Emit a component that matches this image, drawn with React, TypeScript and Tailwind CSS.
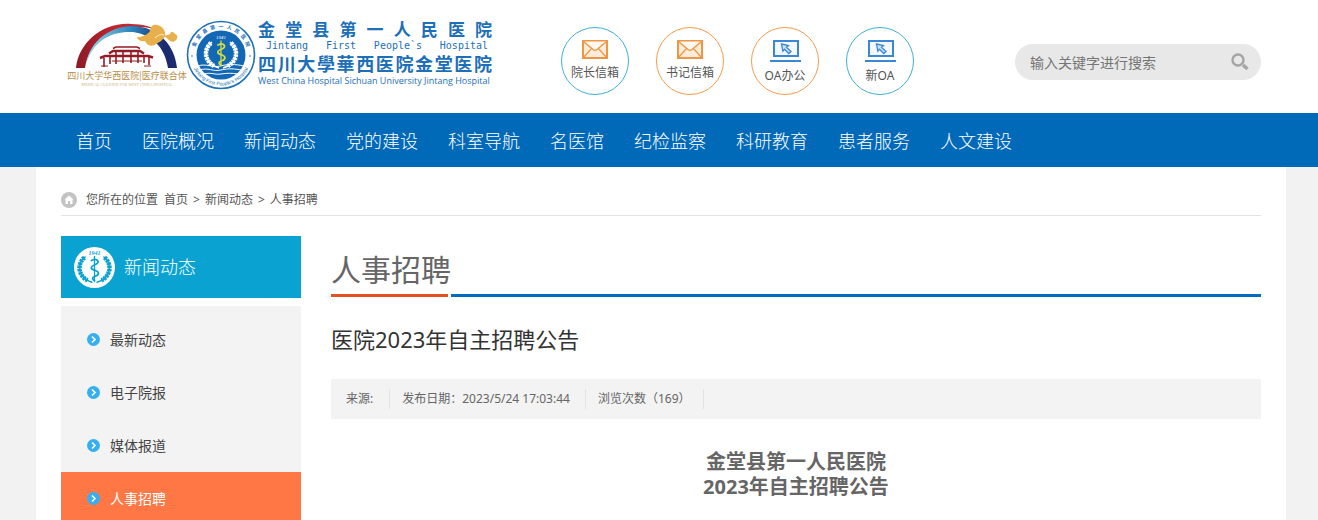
import type { ReactNode } from 'react';

const NAV = ['首页', '医院概况', '新闻动态', '党的建设', '科室导航', '名医馆', '纪检监察', '科研教育', '患者服务', '人文建设'];

const SIDE_LINKS = ['最新动态', '电子院报', '媒体报道', '人事招聘'];
const ACTIVE_LINK = '人事招聘';

const HOSPITAL_NAME = [...'金堂县第一人民医院'];

function MailIcon() {
  return (
    <svg width="26" height="19" viewBox="0 0 26 19" fill="#fdecd9" stroke="#ee9645" strokeWidth="2" aria-hidden="true">
      <rect x="1" y="1" width="24" height="17" />
      <path d="M1.5 1.5 11 9.500q2 1.500 4 0l9.500-8" fill="#fff8f0" strokeWidth="1.400" />
      <path d="M1.500 17.500 9.500 8.500M24.500 17.500 16.500 8.500" fill="none" strokeWidth="1.200" />
    </svg>
  );
}

function LaptopIcon() {
  return (
    <svg width="31" height="22" viewBox="0 0 31 22" fill="none" stroke="#3a88d4" strokeWidth="2" aria-hidden="true">
      <rect x="4" y="1" width="24" height="15" fill="#f3f8fd" />
      <path d="M0 21h31" />
      <path d="m11.500 4 7 1.500-2 1.800 4.500 4.200-2.200 2-4.300-4.300-1.600 2z" fill="#cfe2f5" strokeWidth="1.300" />
    </svg>
  );
}

function RoundLink({ label, ring, children }: { label: string; ring: string; children: ReactNode }) {
  return (
    <a href="#" className={`flex size-[68px] flex-col items-center rounded-full border pt-3 text-[12px] text-[#555] ${ring}`}>
      {children}
      <span className="mt-[5px] leading-[18px] whitespace-nowrap">{label}</span>
    </a>
  );
}

function AllianceLogo() {
  return (
    <svg width="118" height="68" viewBox="0 0 118 68" className="overflow-visible" aria-hidden="true">
      <defs>
        <linearGradient id="arc-red" x1="0" x2="1">
          <stop offset="0" stopColor="#8a1a26" />
          <stop offset="0.500" stopColor="#c2252f" />
          <stop offset="1" stopColor="#b8323a" />
        </linearGradient>
        <linearGradient id="arc-blue" x1="0" x2="1">
          <stop offset="0" stopColor="#9ad6e6" />
          <stop offset="0.500" stopColor="#2b86bb" />
          <stop offset="0.850" stopColor="#1c2b70" />
        </linearGradient>
      </defs>
      <path d="M9 44C12 18 36-2 64 0c12 0 20 3 24 5C60-2 24 8 18 44z" fill="url(#arc-red)" />
      <path d="M19 40C23 16 44 2 66 2c26 1 42 20 44 42h-9C98 24 86 11 66 8 44 7 27 16 19 40z" fill="url(#arc-blue)" />
      <path d="M98 12c1-6-3-10-8-11-4-1-7 2-7 6-3 4-8 6-13 6 1 4 5 5 8 4 2 5 8 6 11 3 4-2 8-5 9-8z" fill="#e7b04a" />
      <path d="M96 11c3 1 5 0 7-1 1-3 4-2 5 0 3 1 3 4 1 6-2 3-6 2-8-1l-5-4z" fill="#e7b04a" />
      <path d="M97 11c-3-1-6 0-9 3" fill="none" stroke="#fff3d6" />
      <g fill="none" stroke="#941c27">
        <path d="M46 24.500 49 23h21l3 1.500" strokeWidth="1.500" />
        <path d="M42 29.500 46 27h27l4 2.500" strokeWidth="2.500" />
        <path d="M33 34 38 32h43l5 1.500" strokeWidth="2.500" />
        <path d="M37 34v9m6-10v7m6-12v12m7-13v12m8-12v12m7-12v12m6-7v7m5-8v10" strokeWidth="1.600" />
        <path d="M34 42h7m36 0h7M45 37h30" />
      </g>
      <text x="60" y="55" textAnchor="middle" fill="#b68d45" fontSize="9" fontFamily="'Noto Sans CJK SC', sans-serif">四川大学华西医院|医疗联合体</text>
      <text x="60" y="62" textAnchor="middle" fill="#cdb184" fontSize="4" fontFamily="'Liberation Serif', serif">MEDICAL CLUSTER FOR WEST CHINA HOSPITAL</text>
    </svg>
  );
}

function Staff({ stroke }: { stroke: string }) {
  return (
    <g fill="none" stroke={stroke} strokeLinecap="round">
      <path d="M0-13V12" strokeWidth="1.300" />
      <path d="M-3-9C3-12 6-7 1-5c-6 2-5 5 0 6 5 2 3 5-1 6-3 1-2 3 0 4" strokeWidth="1.800" />
    </g>
  );
}

function Laurel({ stroke }: { stroke: string }) {
  return (
    <g fill="none" stroke={stroke}>
      <path d="M-9-12C-19-4-16 10-2 14M9-12C19-4 16 10 2 14" strokeWidth="1.500" />
      <path d="M-10-11C-18-4-16 7-7 12M10-11C18-4 16 7 7 12" strokeWidth="4.500" strokeDasharray="2.500 0.700" />
    </g>
  );
}

function HospitalSeal() {
  return (
    <svg width="70" height="70" viewBox="-35 -35 70 70" aria-hidden="true">
      <defs>
        <path id="seal-bottom" d="M-28 12A30.500 30.500 0 0 0 28 12" />
      </defs>
      <circle r="33.500" fill="#fff" stroke="#1d6fb8" strokeWidth="1.600" />
      <circle r="24.500" fill="#1268b5" />
      <path d="M-23 11c8-3 14 2 22 0s15-2 24 0M-21 15c8-3 13 2 21 0s14-1 21 0M-17 19c7-2 11 1 17 0s11-1 17 0" fill="none" stroke="#fff" />
      <g transform="translate(0 -1)"><Laurel stroke="#fff" /></g>
      <g transform="translate(0 -1)"><Staff stroke="#d5df3c" /></g>
      <text y="-16" textAnchor="middle" fill="#fff" fontSize="5" fontStyle="italic" fontFamily="'Liberation Serif', serif">1941</text>
      <g fill="#1d6fb8">
        {HOSPITAL_NAME.map((char, i) => (
          <text key={i} y="-27" transform={`rotate(${(i - 4) * 17})`} textAnchor="middle" fontSize="5" fontWeight="700" fontFamily="'Noto Sans CJK SC', sans-serif">{char}</text>
        ))}
        <circle cx="-29" cy="1" r="0.800" />
        <circle cx="29" cy="1" r="0.800" />
        <text fontSize="5" fontFamily="'Liberation Sans', sans-serif">
          <textPath href="#seal-bottom" startOffset="50%" textAnchor="middle">Jintang First People's Hospital</textPath>
        </text>
      </g>
    </svg>
  );
}

function Spread({ parts, className }: { parts: string[]; className: string }) {
  return (
    <span className={`flex justify-between ${className}`}>
      {parts.map((part, i) => <span key={i}>{part}</span>)}
    </span>
  );
}

function Brand() {
  return (
    <a href="#" className="flex shrink-0 items-start text-[#1d6fb8]">
      <span className="pt-1 pr-px"><AllianceLogo /></span>
      <HospitalSeal />
      <span className="ml-[2px] block w-[238px]">
        <Spread parts={HOSPITAL_NAME} className="pr-1 text-[17px] leading-[20px] font-bold" />
        <Spread parts={['Jintang', 'First', 'People`s', 'Hospital']} className="pr-2 pl-2 font-['DejaVu_Sans_Mono',monospace] text-[10px] leading-[12px]" />
        <Spread parts={[...'四川大學華西医院金堂医院']} className="pr-1 text-[18px] leading-[24px] font-bold" />
        <span className="block font-['Open_Sans',sans-serif] text-[9px] leading-[10px] font-medium whitespace-nowrap">West China Hospital Sichuan University Jintang Hospital</span>
      </span>
    </a>
  );
}

function Header() {
  return (
    <header className="flex h-[113px] items-start pr-[57px] pl-[67px]">
      <div className="pt-5"><Brand /></div>
      <div className="flex gap-[27px] pt-[27px] pl-[65px]">
        <RoundLink label="院长信箱" ring="border-[#3eb1d6]"><MailIcon /></RoundLink>
        <RoundLink label="书记信箱" ring="border-[#fb9a4b]"><MailIcon /></RoundLink>
        <RoundLink label="OA办公" ring="border-[#fb9a4b]"><LaptopIcon /></RoundLink>
        <RoundLink label="新OA" ring="border-[#3eb1d6]"><LaptopIcon /></RoundLink>
      </div>
      <form className="mt-11 ml-auto flex h-9 w-[246px] items-center rounded-full bg-[#e8e8e8] pr-3 pl-[15px]">
        <input
          type="text"
          aria-label="搜索"
          placeholder="输入关键字进行搜索"
          className="min-w-0 flex-1 bg-transparent text-[14px] outline-none placeholder:text-[#757575]"
        />
        <button type="button" aria-label="搜索">
          <svg width="18" height="18" viewBox="0 0 18 18" fill="none" stroke="#a5a5a5">
            <circle cx="7" cy="7" r="5.500" strokeWidth="2.400" />
            <path d="m12 12 4.500 4" strokeWidth="3.600" />
          </svg>
        </button>
      </form>
    </header>
  );
}

function Breadcrumb() {
  return (
    <nav className="flex h-[49px] items-center border-b border-[#e3e3e3] pt-[18px] text-[12px] text-[#555]">
      <svg width="16" height="16" viewBox="0 0 16 16" aria-hidden="true">
        <circle cx="8" cy="8" r="8" fill="#c3c3c3" />
        <path d="m8 3.500 4.500 4H11.500V12H9V9H7v3H4.500V7.500h-1z" fill="#fff" />
      </svg>
      <span className="ml-[9px]">您所在的位置</span>
      <a href="#" className="ml-[6px]">首页</a>
      <span className="mx-[5px]">&gt;</span>
      <a href="#">新闻动态</a>
      <span className="mx-[5px]">&gt;</span>
      <a href="#">人事招聘</a>
    </nav>
  );
}

function Sidebar() {
  return (
    <aside className="w-60 shrink-0">
      <h2 className="flex h-[62px] items-center bg-[#0aa2d1] pl-[13px] text-[18px] font-light text-white">
        <svg width="41" height="41" viewBox="-20.5 -20.5 41 41" className="mr-[9px]" aria-hidden="true">
          <circle r="20.500" fill="#fff" />
          <g transform="translate(0 1)"><Laurel stroke="#0aa2d1" /></g>
          <g transform="translate(0 2)"><Staff stroke="#0aa2d1" /></g>
          <text y="-12.500" textAnchor="middle" fill="#0aa2d1" fontSize="6" fontStyle="italic" fontWeight="700" fontFamily="'Liberation Serif', serif">1941</text>
        </svg>
        新闻动态
      </h2>
      <ul className="mt-2 bg-[#f3f3f3] pt-[7px]">
        {SIDE_LINKS.map((name) => (
          <li key={name}>
            <a
              href="#"
              className={`flex h-[53px] items-center gap-[10px] pl-[26px] text-[14px] ${name === ACTIVE_LINK ? 'bg-[#ff7744] text-white' : 'text-[#444]'}`}
            >
              <svg width="13" height="13" viewBox="0 0 13 13" aria-hidden="true">
                <circle cx="6.500" cy="6.500" r="6.500" fill="#35aff2" />
                <path d="m5 3.500 3 3-3 3" fill="none" stroke="#fff" strokeWidth="1.600" />
              </svg>
              {name}
            </a>
          </li>
        ))}
      </ul>
    </aside>
  );
}

function Article() {
  return (
    <article className="min-w-0 flex-1 text-[#666]">
      <h1 className="flex h-[58px] items-center pt-2 text-[30px]">人事招聘</h1>
      <div className="flex gap-[3px]">
        <div className="h-[3px] w-[117px] bg-[#e65021]" />
        <div className="h-[3px] flex-1 bg-[#006dc3]" />
      </div>
      <h2 className="mt-[25px] text-[22px] leading-[34px] text-[#333]">医院2023年自主招聘公告</h2>
      <div className="mt-[23px] flex h-10 items-center bg-[#f3f3f3] pl-[15px] text-[12px] leading-[20px]">
        <span className="border-r border-[#e3e3e3] pr-4">来源:</span>
        <span className="border-r border-[#e3e3e3] pr-[15px] pl-3">发布日期：2023/5/24 17:03:44</span>
        <span className="border-r border-[#e3e3e3] px-3">浏览次数（169）</span>
      </div>
      <p className="mt-[30px] text-center text-[20px] leading-[25px] font-bold">
        金堂县第一人民医院<br />2023年自主招聘公告
      </p>
    </article>
  );
}

export default function App() {
  return (
    <div className="bg-white font-['Noto_Sans','Noto_Sans_CJK_SC',sans-serif]">
      <Header />
      <nav className="flex h-[54px] items-center gap-[30px] bg-[#0069b8] pt-[2px] pl-[76px] text-[18px] font-light whitespace-nowrap text-white">
        {NAV.map((name) => <a key={name} href="#">{name}</a>)}
      </nav>
      <div className="bg-[#f2f2f2] pr-8 pl-9">
        <main className="bg-white px-[25px]">
          <Breadcrumb />
          <div className="flex gap-[30px] pt-5">
            <Sidebar />
            <Article />
          </div>
        </main>
      </div>
    </div>
  );
}
